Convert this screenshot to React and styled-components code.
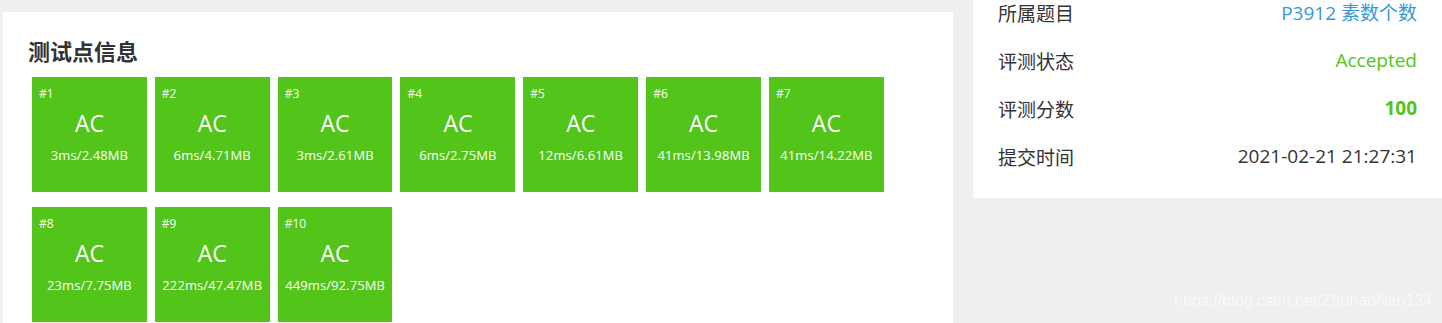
import React from 'react';
import styled, { createGlobalStyle } from 'styled-components';

// STYLES

const GlobalStyle = createGlobalStyle`
    html, body {
        margin: 0;
        padding: 0;
        background: #efefef;
        font-family: "Open Sans", "Noto Sans CJK SC", sans-serif;
        overflow: hidden;
    }
`;

const Page = styled.div`
    position: relative;
    display: flex;
    align-items: flex-start;
    gap: 20px;
    padding-left: 3px;
    height: 323px;
    overflow: hidden;
`;

const MainCard = styled.section`
    width: 950px;
    flex-shrink: 0;
    margin-top: 12px;
    height: 400px;
    background: #ffffff;
    box-sizing: border-box;
    padding: 23px 25px 0 25px;
`;

const Title = styled.h3`
    margin: 0 0 12px 0;
    font-family: "Noto Sans CJK SC", sans-serif;
    font-size: 22px;
    line-height: 30px;
    font-weight: 700;
    color: #333333;
`;

const Cases = styled.div`
    display: flex;
    flex-wrap: wrap;
    column-gap: 8px;
    row-gap: 15px;
    padding-left: 4px;
`;

const CaseTile = styled.div`
    position: relative;
    width: 114.83px;
    height: 115px;
    background: ${p => p.$color};
    color: #ffffff;
    display: flex;
    flex-direction: column;
    align-items: center;
`;

const CaseId = styled.span`
    position: absolute;
    left: 7px;
    top: 9px;
    font-size: 12px;
    line-height: 16px;
    font-weight: 400;
`;

const CaseStatus = styled.div`
    margin-top: 31px;
    font-size: 23px;
    line-height: 30px;
`;

const CaseInfo = styled.div`
    margin-top: 8px;
    font-size: 13px;
    letter-spacing: 0.1px;
    line-height: 18px;
`;

const SideCard = styled.aside`
    flex: 1;
    margin-top: -27px;
    background: #ffffff;
    box-sizing: border-box;
    padding: 15px 25px 18px;
`;

const InfoRow = styled.div`
    display: flex;
    justify-content: space-between;
    align-items: center;
    height: 48px;
    font-size: 19px;
`;

const Label = styled.span`
    color: #333333;
    font-family: "Noto Sans CJK SC", sans-serif;
`;

const Value = styled.span`
    color: ${p => p.$color || '#333333'};
    font-weight: ${p => (p.$bold ? 700 : 400)};
`;

const Watermark = styled.div`
    position: absolute;
    right: 10px;
    top: 292px;
    font-family: "Liberation Sans", Arial, sans-serif;
    font-size: 16px;
    color: rgba(255, 255, 255, 0.9);
    text-shadow: 0 0 1px rgba(0, 0, 0, 0.06);
`;

const cases = [
    ['3ms', '2.48MB'],
    ['6ms', '4.71MB'],
    ['3ms', '2.61MB'],
    ['6ms', '2.75MB'],
    ['12ms', '6.61MB'],
    ['41ms', '13.98MB'],
    ['41ms', '14.22MB'],
    ['23ms', '7.75MB'],
    ['222ms', '47.47MB'],
    ['449ms', '92.75MB'],
];

// COMPONENT

export default function App() {
    return (
        <>
            <GlobalStyle />
            <Page>
                <MainCard>
                    <Title>测试点信息</Title>
                    <Cases>
                        {cases.map(([time, mem], i) => (
                            <CaseTile key={i} $color="#52c41a">
                                <CaseId>#{i + 1}</CaseId>
                                <CaseStatus>AC</CaseStatus>
                                <CaseInfo>{time}/{mem}</CaseInfo>
                            </CaseTile>
                        ))}
                    </Cases>
                </MainCard>
                <SideCard>
                    <InfoRow>
                        <Label>所属题目</Label>
                        <Value $color="#3498db">P3912 素数个数</Value>
                    </InfoRow>
                    <InfoRow>
                        <Label>评测状态</Label>
                        <Value $color="#52c41a">Accepted</Value>
                    </InfoRow>
                    <InfoRow>
                        <Label>评测分数</Label>
                        <Value $color="#52c41a" $bold>100</Value>
                    </InfoRow>
                    <InfoRow>
                        <Label>提交时间</Label>
                        <Value>2021-02-21 21:27:31</Value>
                    </InfoRow>
                </SideCard>
                <Watermark>https://blog.csdn.net/ZhuhaoNan134</Watermark>
            </Page>
        </>
    );
}
